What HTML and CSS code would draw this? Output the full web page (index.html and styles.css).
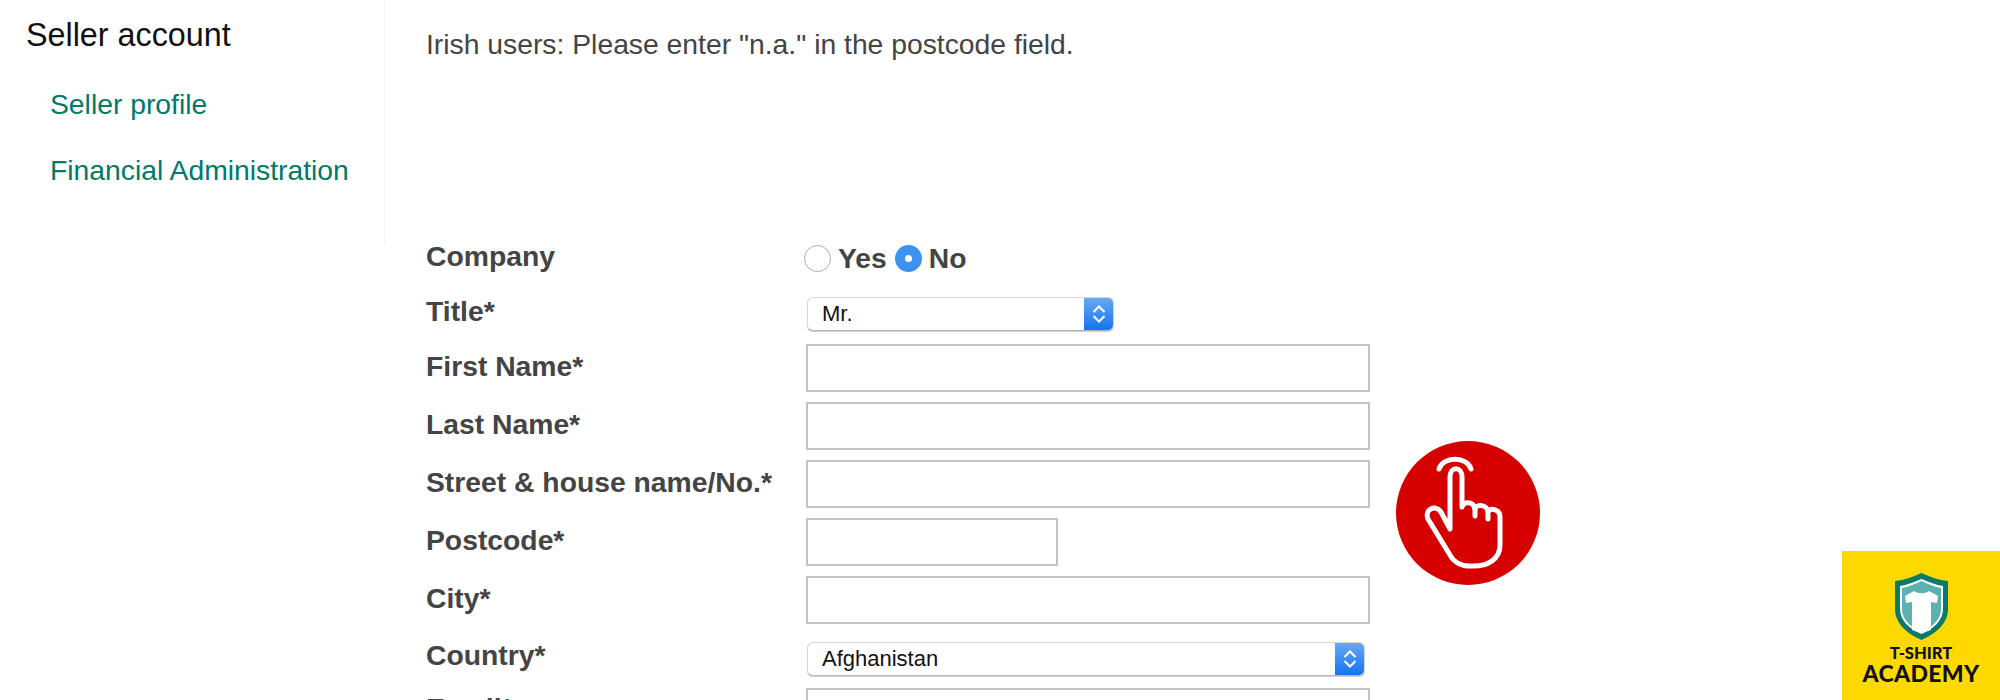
FILE: index.html
```html
<!DOCTYPE html>
<html lang="en">
<head>
<meta charset="utf-8">
<title>Seller account</title>
<link rel="stylesheet" href="styles.css">
</head>
<body>
<div class="page">
  <aside class="sidebar">
    <h2 class="side-title">Seller account</h2>
    <a class="side-link" href="#">Seller profile</a>
    <a class="side-link" href="#">Financial Administration</a>
  </aside>
  <main class="main">
    <p class="notice">Irish users: Please enter "n.a." in the postcode field.</p>
    <form class="form">
      <div class="label r-company">Company</div>
      <div class="radios r-company">
        <span class="radio"></span><span class="opt">Yes</span>
        <span class="radio on"></span><span class="opt">No</span>
      </div>
      <div class="label r-title">Title*</div>
      <div class="r-title"><div class="select title"><span>Mr.</span><i class="stepper"><svg viewBox="0 0 16 22" width="16" height="22"><path d="M2.5 9L8 3.5 13.5 9M2.5 13L8 18.5 13.5 13" fill="none" stroke="#fff" stroke-width="2"/></svg></i></div></div>
      <div class="label pad r-input">First Name*</div>
      <div class="r-input"><div class="input"></div></div>
      <div class="label pad r-input">Last Name*</div>
      <div class="r-input"><div class="input"></div></div>
      <div class="label pad r-input">Street &amp; house name/No.*</div>
      <div class="r-input"><div class="input"></div></div>
      <div class="label pad r-input">Postcode*</div>
      <div class="r-input"><div class="input short"></div></div>
      <div class="label pad r-city">City*</div>
      <div class="r-city"><div class="input"></div></div>
      <div class="label r-country">Country*</div>
      <div class="r-country"><div class="select country"><span>Afghanistan</span><i class="stepper"><svg viewBox="0 0 16 22" width="16" height="22"><path d="M2.5 9L8 3.5 13.5 9M2.5 13L8 18.5 13.5 13" fill="none" stroke="#fff" stroke-width="2"/></svg></i></div></div>
      <div class="label pad-last r-input">Email*</div>
      <div class="r-input"><div class="input"></div></div>
    </form>
  </main>
</div>
<div class="pointer">
  <svg viewBox="0 0 144 144" width="144" height="144">
    <circle cx="72" cy="72" r="72" fill="#d70000"/>
    <g fill="none" stroke="#fff" stroke-width="5" stroke-linecap="round" stroke-linejoin="round">
      <path d="M43 28c4-13 28-13 32 0"/>
      <path d="M54 88V36c0-11 12-11 12 0v30c1-6 12-6 13 2 1-5 12-5 13 3 1-5 12-3 12 5v28c0 14-12 22-30 21-10 0-17-5-20-11L32 78c-4-10 8-15 13-7z"/>
      <path d="M79 68v7M92 71v7"/>
    </g>
  </svg>
</div>
<div class="badge">
  <svg viewBox="0 0 53 67" width="53" height="67">
    <path d="M26.500 0C35 4 44 7 53 8v28c0 15-13 25-26.500 31C13 61 0 51 0 36V8C9 7 18 4 26.500 0z" fill="#0b7a6b"/>
    <path d="M26.500 6C34 9 41 12 48 13v23c0 12-10 20-21.500 25C15 56 5 48 5 36V13c7-1 14-4 21.500-7z" fill="#fff"/>
    <path d="M26.500 8C33 11 40 14 46 15v21c0 11-9 18-19.500 23C16 54 7 47 7 36V15c6-1 13-4 19.500-7z" fill="#5cb0af"/>
    <path d="M19 18c4 3 11 3 15 0l9 5-1 7-6-1v28l-9.500 3-9.500-3V29l-6 1-1-7z" fill="#fff"/>
  </svg>
  <div class="b-top">T-SHIRT</div>
  <div class="b-bottom">ACADEMY</div>
</div>
</body>
</html>
```
FILE: styles.css
```css
* { box-sizing: border-box; }
html, body { margin: 0; height: 700px; overflow: hidden; background: #fff; }
body { font-family: "Liberation Sans", Arial, sans-serif; color: #444; }
.page { display: flex; align-items: flex-start; height: 700px; overflow: hidden; }
.sidebar { width: 385px; height: 244px; padding: 17px 0 0 26px; border-right: 1px solid #f3f3f3; flex: none; }
.side-title { margin: 0 0 35px; font-size: 32.300px; font-weight: 400; line-height: 36px; color: #111; }
.side-link { display: block; margin: 0 0 33px 24px; font-size: 28.300px; line-height: 33px; color: #007a6a; text-decoration: none; }
.main { padding: 28px 0 0 41px; flex: 1; }
.notice { margin: 0 0 180px; font-size: 28.300px; line-height: 32px; color: #444; }
.form { display: grid; grid-template-columns: 380px 600px; align-items: start; }
.label { font-size: 28.300px; font-weight: 700; line-height: 32px; color: #444; }
.pad { padding-top: 6px; }
.pad-last { padding-top: 4px; }
.r-company { height: 55px; }
.r-title { height: 49px; }
.r-input { height: 58px; }
.r-city { height: 63px; }
.r-country { height: 49px; }
.radios { display: flex; align-items: flex-start; gap: 7px; margin-left: -2px; padding-top: 5px; font-size: 28.300px; font-weight: 700; line-height: 27px; }
.radio { width: 27px; height: 27px; border-radius: 50%; border: 1px solid #aaa; background: #fff; flex: none; }
.radio.on { border: 10px solid #3b92f0; margin-left: 1px; }
.select { display: flex; align-items: center; justify-content: space-between; height: 34px; background: #fff; border: 1px solid #d8d8d8; border-bottom-color: #b5b5b5; border-radius: 6px; font-size: 22px; color: #111; padding-left: 14px; overflow: hidden; box-shadow: 0 1px 1px #ccc; }
.select.title { width: 307px; margin: 2px 0 0 1px; }
.select.country { width: 558px; margin: 3px 0 0 1px; }
.stepper { display: flex; align-items: center; justify-content: center; width: 29px; height: 34px; background: linear-gradient(#6aaaf4, #1272f0); flex: none; }
.input { width: 564px; height: 48px; border: 2px solid #c4c4c4; background: #fff; }
.input.short { width: 252px; }
.pointer { position: absolute; left: 1396px; top: 441px; width: 144px; height: 144px; }
.pointer svg, .badge svg { display: block; }
.badge { position: absolute; left: 1842px; top: 551px; width: 158px; height: 149px; background: #fdd900; display: flex; flex-direction: column; align-items: center; padding-top: 22px; color: #111; font-family: Lato, sans-serif; font-weight: 900; }
.b-top { font-size: 16.600px; line-height: 17px; margin-top: 5px; }
.b-bottom { font-size: 23px; line-height: 22px; letter-spacing: 0.3px; }
```
